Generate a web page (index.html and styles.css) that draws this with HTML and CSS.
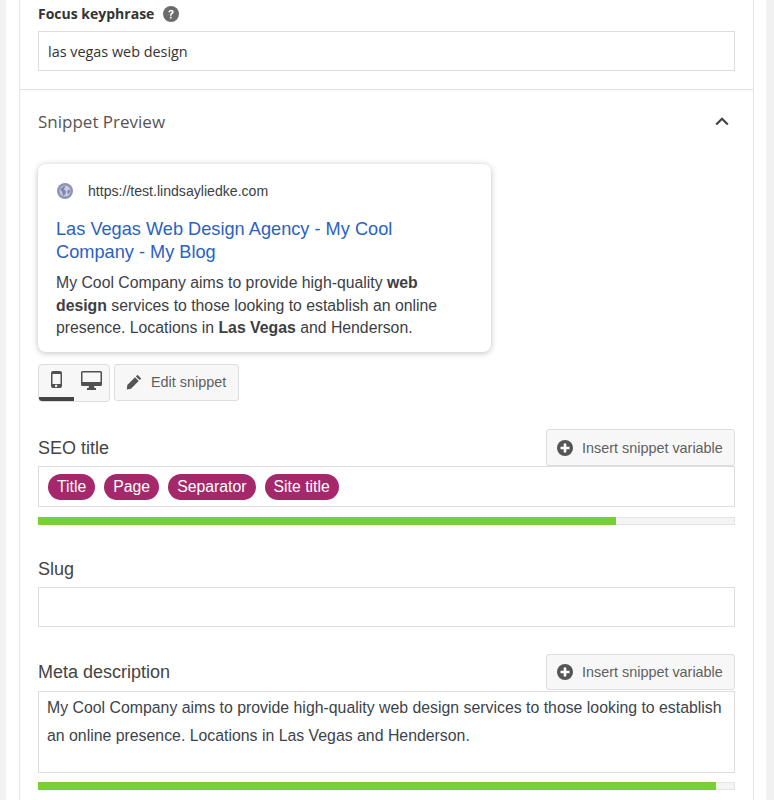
FILE: index.html
```html
<!DOCTYPE html>
<html lang="en">
<head>
<meta charset="utf-8">
<title>Snippet editor</title>
<link rel="stylesheet" href="styles.css">
</head>
<body>
<main class="panel">
  <div class="box">
    <section class="keyphrase">
      <div class="kp-label"><span>Focus keyphrase</span>
        <svg class="help" viewBox="0 0 16 16" width="16" height="16"><circle cx="8" cy="8" r="8" fill="#6b6b6b"/><path d="M5.4 6.2C5.5 4.6 6.6 3.7 8.1 3.7c1.500 0 2.600.9 2.600 2.200 0 1-.5 1.500-1.300 2-.7.5-.9.8-.9 1.500v.3H7v-.5c0-1 .3-1.500 1.100-2.100.6-.4.8-.7.8-1.100 0-.5-.4-.8-.9-.8-.6 0-1 .4-1 1zM7 10.700h1.600v1.700H7z" fill="#fff"/></svg>
      </div>
      <div class="input kp-input">las vegas web design</div>
    </section>
    <section class="snippet">
      <div class="sp-head"><span>Snippet Preview</span>
        <svg class="chev" viewBox="0 0 14 9" width="14" height="9"><path d="M1.200 7.500 7 1.800l5.800 5.700" fill="none" stroke="#444" stroke-width="2.200"/></svg>
      </div>
      <div class="card">
        <div class="url-row">
          <svg class="globe" viewBox="0 0 16 16" width="16" height="16"><circle cx="8" cy="8" r="8" fill="#8f93b8"/><circle cx="8" cy="8" r="5.500" fill="#c9cde0"/><path d="M3 6c2-1 3-3 5-3 1 1-1 2-1 3s2 1 2 3-2 4-3 4c0-2-1-3-1-4S4 8 3 6zm8 1 2 0c0 2-1 4-2 4-1-1-1-3 0-4z" fill="#8287ad"/></svg>
          <span>https://test.lindsayliedke.com</span>
        </div>
        <div class="serp-title">Las Vegas Web Design Agency - My Cool Company - My Blog</div>
        <div class="serp-desc">My Cool Company aims to provide high-quality <b>web design</b> services to those looking to establish an online presence. Locations in <b>Las Vegas</b> and Henderson.</div>
      </div>
      <div class="tools">
        <div class="toggle">
          <div class="tg tg-on"><svg viewBox="0 0 11 17" width="11" height="17"><path fill-rule="evenodd" d="M2 0h7a2 2 0 0 1 2 2v13a2 2 0 0 1-2 2H2a2 2 0 0 1-2-2V2a2 2 0 0 1 2-2zm-.5 3v10h8V3zm4 10.800a1.200 1.200 0 1 0 0 2.300 1.200 1.200 0 0 0 0-2.300z" fill="#505050"/></svg></div>
          <div class="tg"><svg viewBox="0 0 21 19" width="21" height="19"><path fill-rule="evenodd" d="M1.500 0h18A1.500 1.500 0 0 1 21 1.500v12a1.500 1.500 0 0 1-1.500 1.500H13l.5 2H15v2H6v-2h1.500l.5-2H1.500A1.500 1.500 0 0 1 0 13.500v-12A1.500 1.500 0 0 1 1.500 0zM1.500 1.500V11h18V1.500z" fill="#505050"/></svg></div>
        </div>
        <button class="btn edit"><svg viewBox="0 0 16 16" width="16" height="16"><path d="M11.500.8 15.200 4.500 13.600 6.100 9.900 2.400zM9 3.300 12.700 7 5 14.700 0.800 15.500 1.300 11z" fill="#555"/></svg>Edit snippet</button>
      </div>
      <div class="field seo">
        <div class="f-head"><label>SEO title</label>
          <button class="btn ins"><svg viewBox="0 0 16 16" width="16" height="16"><circle cx="8" cy="8" r="8" fill="#555"/><path d="M6.700 3.500h2.600v3.200h3.200v2.600H9.300v3.200H6.700V9.300H3.500V6.700h3.200z" fill="#fff"/></svg>Insert snippet variable</button>
        </div>
        <div class="input pills"><span class="pill">Title</span><span class="pill">Page</span><span class="pill">Separator</span><span class="pill">Site title</span></div>
        <div class="progress"><div class="fill" style="width:83.100%"></div></div>
      </div>
      <div class="field slug">
        <label>Slug</label>
        <div class="input slug-input"></div>
      </div>
      <div class="field meta">
        <div class="f-head"><label>Meta description</label>
          <button class="btn ins"><svg viewBox="0 0 16 16" width="16" height="16"><circle cx="8" cy="8" r="8" fill="#555"/><path d="M6.700 3.500h2.600v3.200h3.200v2.600H9.300v3.200H6.700V9.300H3.500V6.700h3.200z" fill="#fff"/></svg>Insert snippet variable</button>
        </div>
        <div class="input area">My Cool Company aims to provide high-quality web design services to those looking to establish an online presence. Locations in Las Vegas and Henderson.</div>
        <div class="progress"><div class="fill" style="width:97.600%"></div></div>
      </div>
    </section>
  </div>
</main>
</body>
</html>
```

FILE: styles.css
```css
* { box-sizing: border-box; }
html, body { margin: 0; height: 800px; overflow: hidden; }
body { background: #f1f1f1; padding: 0 8px 0 6px; font-family: "Liberation Sans", Arial, sans-serif; color: #444; }
.panel { background: #fff; height: 800px; padding: 0 12px 0 13px; }
.box { border-left: 1px solid #e6e6e6; border-right: 1px solid #e6e6e6; height: 800px; }
.keyphrase { padding: 0 18px 18px; border-bottom: 1px solid #e2e2e2; height: 90px; }
.kp-label { height: 31px; padding-top: 5px; display: flex; align-items: flex-start; gap: 9px; font: 700 14px/18px "Open Sans", sans-serif; color: #333; }
.help { margin-top: 1px; }
.input { border: 1px solid #ddd; background: #fff; }
.kp-input { height: 40px; padding: 0 9px; font: 14.4px/40px "Open Sans", sans-serif; color: #333; }
.snippet { padding: 0 18px; }
.sp-head { height: 74px; padding-top: 20px; display: flex; justify-content: space-between; font: 17px/24px "Open Sans", sans-serif; color: #555; }
.chev { margin: 7px 6px 0 0; }
.card { width: 453px; height: 188px; border-radius: 8px; background: #fff; box-shadow: 0 1px 6px rgba(32,33,36,.28); padding: 17px 18px 0; }
.url-row { display: flex; align-items: center; gap: 15px; height: 20px; font-size: 14.1px; color: #3c4043; }
.globe { margin-left: 1px; }
.serp-title { margin-top: 17px; max-width: 345px; font-size: 18.2px; line-height: 23px; color: #2a62bf; }
.serp-desc { margin-top: 8px; font-size: 15.8px; line-height: 22.500px; color: #3c4043; }
.tools { display: flex; gap: 4px; margin-top: 12px; align-items: flex-start; }
.toggle { width: 72px; height: 38px; display: flex; border: 1px solid #ddd; border-radius: 4px; background: #f7f7f7; overflow: hidden; }
.tg { width: 35px; display: flex; justify-content: center; padding-top: 6px; }
.tg-on { border-bottom: 4px solid #444; }
.btn { display: flex; align-items: center; font-family: "Liberation Sans", Arial, sans-serif; color: #5f5f5f; background: #f7f7f7; border: 1px solid #ddd; border-radius: 3px; padding: 0; }
.edit { width: 125px; height: 37px; font-size: 14.4px; gap: 9px; padding: 0 0 2px 11px; }
.field label { font-size: 18px; line-height: 22px; color: #444; }
.f-head { display: flex; justify-content: space-between; align-items: flex-start; height: 37px; }
.f-head label { padding-top: 8px; }
.ins { width: 189px; height: 37px; font-size: 14.4px; gap: 9px; padding-left: 10px; }
.seo { margin-top: 27px; }
.pills { height: 41px; padding: 7px 9px; display: flex; gap: 9px; }
.pill { height: 26px; line-height: 25px; padding: 0 9px; background: #a4286a; color: #fff; border-radius: 13px; font-size: 15.8px; }
.progress { height: 8px; margin-top: 10px; background: #f4f4f4; border: 1px solid #e4e4e4; }
.fill { height: 8px; margin: -1px 0 0 -1px; background: #77cf3a; }
.slug { margin-top: 33px; }
.slug label { display: block; }
.slug-input { height: 40px; margin-top: 7px; }
.meta { margin-top: 27px; }
.meta .f-head label { padding-top: 7px; }
.meta .ins { height: 36px; }
.area { height: 82px; padding: 2px 8px; font-size: 15.85px; line-height: 28px; color: #3c434a; }
.meta .progress { margin-top: 9px; }
```
